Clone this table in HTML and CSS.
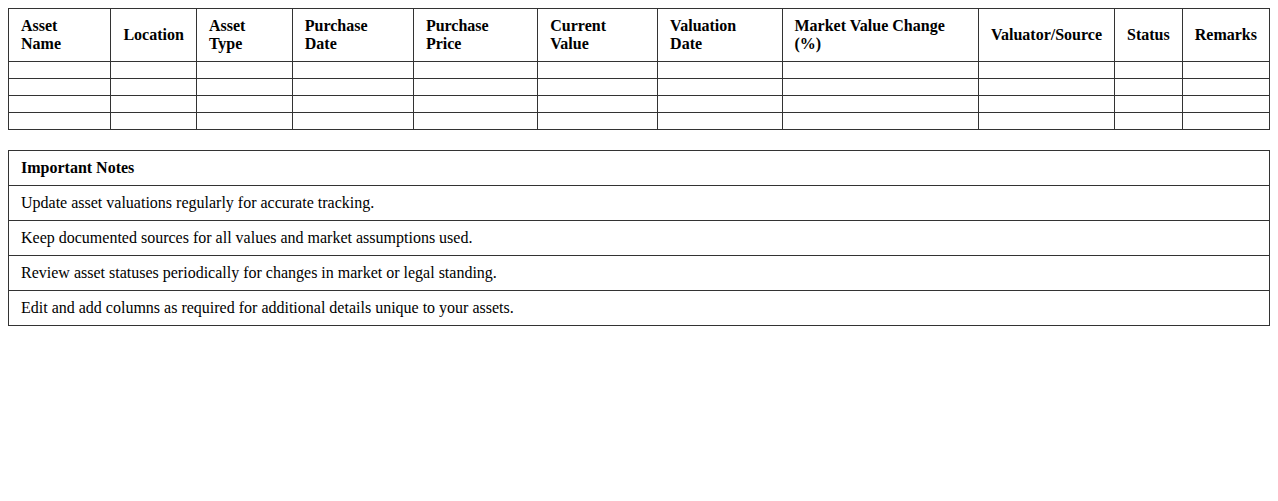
FILE: index.html
```html
<!DOCTYPE html>
<html>
<head>
<meta charset="utf-8">
<link rel="stylesheet" href="styles.css">
</head>
<body>
<table class="grid">
  <thead>
    <tr>
      <th>Asset Name</th>
      <th>Location</th>
      <th>Asset Type</th>
      <th>Purchase Date</th>
      <th>Purchase Price</th>
      <th>Current Value</th>
      <th>Valuation Date</th>
      <th>Market Value Change (%)</th>
      <th>Valuator/Source</th>
      <th>Status</th>
      <th>Remarks</th>
    </tr>
  </thead>
  <tbody>
    <tr><td></td><td></td><td></td><td></td><td></td><td></td><td></td><td></td><td></td><td></td><td></td></tr>
    <tr><td></td><td></td><td></td><td></td><td></td><td></td><td></td><td></td><td></td><td></td><td></td></tr>
    <tr><td></td><td></td><td></td><td></td><td></td><td></td><td></td><td></td><td></td><td></td><td></td></tr>
    <tr><td></td><td></td><td></td><td></td><td></td><td></td><td></td><td></td><td></td><td></td><td></td></tr>
  </tbody>
</table>
<table class="notes">
  <thead>
    <tr><th>Important Notes</th></tr>
  </thead>
  <tbody>
    <tr><td>Update asset valuations regularly for accurate tracking.</td></tr>
    <tr><td>Keep documented sources for all values and market assumptions used.</td></tr>
    <tr><td>Review asset statuses periodically for changes in market or legal standing.</td></tr>
    <tr><td>Edit and add columns as required for additional details unique to your assets.</td></tr>
  </tbody>
</table>
</body>
</html>
```

FILE: styles.css
```css
html, body {
  background: #fff;
}
body {
  margin: 8px;
  font-family: "Liberation Serif", "Times New Roman", serif;
  font-size: 16px;
  color: #000;
}
table {
  width: 100%;
  border-collapse: collapse;
}
th, td {
  border: 1px solid #333;
  padding: 8px 12px;
  text-align: left;
  line-height: 18px;
}
th {
  font-weight: bold;
}
.notes {
  margin-top: 20px;
}
```
